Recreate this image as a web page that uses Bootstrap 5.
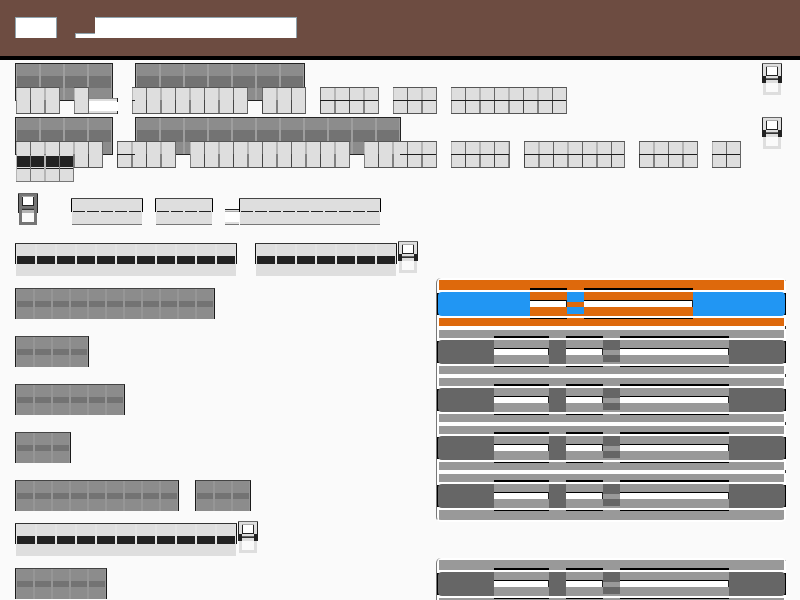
<!DOCTYPE html>
<html lang="en">
<head>
<meta charset="utf-8">
<meta name="viewport" content="width=device-width, initial-scale=1">
<title>Settings</title>
<link href="https://cdn.jsdelivr.net/npm/bootstrap@5.3.0/dist/css/bootstrap.min.css" rel="stylesheet">
<style>
body { background: #fafafa; font-family: Roboto, sans-serif; }
.appbar { background: #6d4c41; height: 60px; border-bottom: 4px solid #000; padding: 17px 15px 0; }
.brand-blk { height: 21px; background: #fff; border: 1px solid #90a4ae; border-bottom: 0; }
.brand-low { height: 5px; width: 20px; background: #fff; border: solid #90a4ae; border-width: 1px 0 0 1px; margin: 16px 0 0 18px; }
.brand-low + .brand-blk { border-left-color: #fff; }
.entry { padding: 3px 18px 0 15px; }
.glyph { display: block; width: 20px; height: 32px; flex: none; }

/* title words: 24px cells */
.title-line { height: 24px; gap: 22px; }
.tw { height: 38px; flex: none; width: calc(var(--n) * 24px + 2px); border: 1px solid #222;
  background:
    linear-gradient(90deg, #9e9e9e 1px, transparent 1px 23px, #9e9e9e 23px) 0 0 / 24px 100%,
    linear-gradient(#8c8c8c 0 12px, #737373 12px 24px, #8c8c8c 24px); }

/* paragraph words: two cells every 29px */
.para { gap: 14px; padding-left: 1px; position: relative; z-index: 1; }
.para.first-line { height: 14px; }
.pw { height: 27px; flex: none; --mx: 0; --mw: 0px;
  border: solid #555; border-width: 1px 0;
  background:
    linear-gradient(#1c1c1c, #1c1c1c) var(--mx) 12px / var(--mw) 1px no-repeat,
    linear-gradient(90deg, #b5b5b5 1px, transparent 1px 14px, #666 14px 15px, transparent 15px 28px, #b5b5b5 28px) 0 0 / 29px 12px repeat-x,
    linear-gradient(90deg, #808080 1px, transparent 1px 14px, #444 14px 15px, transparent 15px 28px, #808080 28px) 0 12px / 29px 13px repeat-x,
    #dedede;
  border-right: 1px solid #666; }
.pw.alt { background-position: var(--mx) 12px, -14px 0, -14px 12px, 0 0; }
.pw.mid { --mw: 100%; }
.pw.mid-start { --mw: 18px; }
.pw.mid-edge { --mw: 3px; }
.pw.mid-end { --mx: 100%; --mw: 36px; }
.n1 { width: 15px; } .n2 { width: 29px; } .n3 { width: 44px; } .n4 { width: 59px; } .n5 { width: 73px; }
.n6 { width: 87px; } .n7 { width: 101px; } .n8 { width: 116px; } .n11 { width: 160px; }
.low { width: 29px; height: 16px; margin: 11px 0 0 -14px;
  background:
    linear-gradient(#222 0 4px, transparent 4px 13px, #222 13px) 100% 0 / 1px 100% no-repeat,
    linear-gradient(#888 0 1px, #dedede 1px 3px, #fff 3px 13px, #dedede 13px 15px, #777 15px); }
.under-line { height: 27px; padding-left: 1px; position: relative; z-index: 2; }
.marked { height: 27px; flex: none; width: 58px; border-right: 1px solid #777; border-bottom: 1px solid #777;
  background:
    linear-gradient(90deg, #b5b5b5 1px, transparent 1px 14px, #777 14px 15px, transparent 15px 28px, #b5b5b5 28px) 0 0 / 29px 100%,
    linear-gradient(#dedede 0 1px, #222 1px 12px, #dedede 12px 13px, #222 13px 14px, #dedede 14px); }

/* pale row next to the grey glyph */
.status { padding: 11px 18px 0; height: 59px; }
.status-words { margin-left: 33px; padding-top: 5px; gap: 12px; }
.sw { height: 27px; flex: none; width: calc(var(--n) * 14px + 2px); border-top: 1px solid #444;
  background:
    linear-gradient(#000, #000) 0 0 / 1px 13px no-repeat,
    linear-gradient(#000, #000) 100% 0 / 1px 13px no-repeat,
    linear-gradient(90deg, #e6e6e6 1px, #222 1px 13px, #e6e6e6 13px) 1px 12px / 14px 1px repeat-x,
    linear-gradient(#dedede 0 25px, #777 25px) 1px 0 / calc(100% - 2px) 100% no-repeat; }
.sw-low { width: 14px; height: 16px; margin-top: 11px;
  background: linear-gradient(#222 0 1px, #dedede 1px 2px, #aaa 2px 3px, #fff 3px 13px, #dedede 13px 15px, #777 15px); }

/* section headings: 20px cells */
.sect { height: 37px; padding-left: 15px; }
.sect-words { gap: 18px; padding-top: 2px; margin-right: 1px; }
.hw { height: 33px; flex: none; width: calc(var(--n) * 20px + 2px); border-top: 1px solid #333;
  background:
    linear-gradient(#111, #111) 0 0 / 1px 20px no-repeat,
    linear-gradient(#111, #111) 100% 0 / 1px 20px no-repeat,
    linear-gradient(90deg, #e3e3e3 2px, #222 2px) 0 12px / 20px 8px repeat-x,
    linear-gradient(90deg, #e3e3e3 2px, transparent 2px) 0 0 / 20px 12px repeat-x,
    linear-gradient(#dedede, #dedede) 1px 0 / calc(100% - 2px) 100% no-repeat; }

/* option rows: 18px cells */
.opt { height: 48px; padding: 0 14px 0 15px; }
.opt-label { gap: 16px; padding-top: 10px; }
.ow { height: 31px; flex: none; width: calc(var(--n) * 18px + 2px); border: solid #1a1a1a; border-width: 1px 1px 0; border-top-color: #444;
  background:
    linear-gradient(90deg, #969696 1px, transparent 1px 17px, #969696 17px) 0 0 / 18px 100%,
    linear-gradient(#8c8c8c 0 12px, #737373 12px 18px, #8c8c8c 18px); }
.pick { --a: #999; --b: #666; --t: 4px; width: 350px; height: 48px; flex: none; border: 0; padding: 0 1px; position: relative;
  border-left: 1px solid #777;
  background:
    linear-gradient(#000, #000) 0 15px / 2px 22px no-repeat,
    linear-gradient(#000, #000) 100% 15px / 2px 22px no-repeat,
    linear-gradient(#333, #333) 100% 0 / 1px 3px no-repeat,
    linear-gradient(#fff 0 var(--t), var(--a) var(--t) 12px, #fff 12px 14px, transparent 14px 38px, #fff 38px 40px, var(--a) 40px) 2px 0 / calc(100% - 4px) 100% no-repeat,
    #fff; }
.pick::before { content: ""; position: absolute; left: 1px; right: 1px; top: 14px; height: 24px; border-radius: 4px; background: var(--b); }
.pick.top { --t: 2px; border-top-left-radius: 5px; border-top-right-radius: 5px; }
.pick.chosen { --a: #de690c; --b: #2196f3; }
.pick.bottom { height: 52px; border-bottom: 2px solid #fff; border-radius: 0 0 5px 5px; }
.lw { height: 48px; position: relative; flex: none;
  background:
    linear-gradient(#222, #222) 100% 22px / 1px 7px no-repeat,
    linear-gradient(transparent 10px, #000 10px 12px, #fff 12px 14px, var(--a) 14px 22px, #000 22px 23px, #fff 23px 29px, var(--a) 29px 38px, #fff 38px 40px, #000 40px 41px, transparent 41px); }
.lw.w2 { width: 37px; } .lw.w3 { width: 55px; } .lw.w6 { width: 109px; }
.ld { height: 48px; width: 17px; position: relative; flex: none;
  background: linear-gradient(transparent 14px, var(--b) 14px 24px, var(--a) 24px 29px, var(--b) 29px 36px, var(--a) 36px 38px, transparent 38px); }
.lsp { width: 17px; flex: none; }
.later { padding-top: 3px; }
</style>
<script src="https://cdn.jsdelivr.net/npm/bootstrap@5.3.0/dist/js/bootstrap.bundle.min.js"></script>
</head>
<body class="vh-100 overflow-hidden">
<svg class="d-none">
  <symbol id="box-glyph" viewBox="0 0 20 32">
    <path fill="currentColor" d="M1 18H19V32H1Z M0 0H20V20H0Z"/>
    <path fill="#222" d="M0 0H1V20H0Z M19 0H20V20H19Z M4 4H5V13H4Z M15 4H16V13H15Z M4 12H16V13H4Z"/>
    <path fill="#666" d="M0 0H20V1H0Z M4 15H16V16H4Z"/>
    <path fill="#aaa" d="M4 3H16V4H4Z"/>
    <path fill="#fff" d="M5 4H15V12H5Z"/>
    <path fill="#333" d="M4 16H16V17H4Z"/>
    <path fill="#fafafa" d="M4 20H16V29H4Z"/>
    <path fill="#dedede" d="M4 17H16V20H4Z" opacity=".6"/>
  </symbol>
  <symbol id="ends" viewBox="0 0 20 32">
    <use href="#box-glyph"/>
    <path fill="#222" d="M0 13H4V20H0Z M16 13H20V20H16Z"/>
  </symbol>
</svg>

<header class="appbar d-flex align-items-start">
  <span class="brand-blk" style="width:42px"></span>
  <span class="brand-low"></span>
  <span class="brand-blk" style="width:202px"></span>
</header>

<main>
  <section class="entry d-flex justify-content-between align-items-start">
    <div>
      <div class="title-line d-flex"><span class="tw" style="--n:4"></span><span class="tw" style="--n:7"></span></div>
      <div class="para d-flex">
        <span class="pw n3"></span><span class="pw n1"></span><span class="low"></span><span class="pw mid-edge n8"></span>
        <span class="pw alt n3"></span><span class="pw alt mid n4"></span><span class="pw mid n3"></span><span class="pw mid n8"></span>
      </div>
    </div>
    <svg class="glyph" style="color:#dedede"><use href="#ends"/></svg>
  </section>

  <section class="entry d-flex justify-content-between align-items-start">
    <div>
      <div class="title-line d-flex"><span class="tw" style="--n:4"></span><span class="tw" style="--n:11"></span></div>
      <div class="para first-line d-flex">
        <span class="pw n6"></span><span class="pw alt mid-start n4"></span><span class="pw n11"></span><span class="pw mid-end n5"></span>
        <span class="pw mid n4"></span><span class="pw alt mid n7"></span><span class="pw alt mid n4"></span><span class="pw mid n2"></span>
      </div>
      <div class="under-line d-flex"><span class="marked"></span></div>
    </div>
    <svg class="glyph" style="color:#dedede"><use href="#ends"/></svg>
  </section>

  <section class="status d-flex align-items-start">
    <svg class="glyph" style="color:#757575"><use href="#box-glyph"/></svg>
    <div class="status-words d-flex">
      <span class="sw" style="--n:5"></span><span class="sw" style="--n:4"></span>
      <span class="d-flex"><span class="sw-low"></span><span class="sw" style="--n:10"></span></span>
    </div>
  </section>

  <section>
    <div class="sect d-flex align-items-start">
      <div class="sect-words d-flex"><span class="hw" style="--n:11"></span><span class="hw" style="--n:7"></span></div>
      <svg class="glyph" style="color:#dedede"><use href="#ends"/></svg>
    </div>
    <div class="opt d-flex justify-content-between">
      <div class="opt-label d-flex"><span class="ow" style="--n:11"></span></div>
      <button type="button" class="pick top chosen d-flex justify-content-center"><span class="lw w2"></span><span class="ld"></span><span class="lw w6"></span></button>
    </div>
    <div class="opt d-flex justify-content-between">
      <div class="opt-label d-flex"><span class="ow" style="--n:4"></span></div>
      <button type="button" class="pick d-flex justify-content-center"><span class="lw w3"></span><span class="lsp"></span><span class="lw w2"></span><span class="ld"></span><span class="lw w6"></span></button>
    </div>
    <div class="opt d-flex justify-content-between">
      <div class="opt-label d-flex"><span class="ow" style="--n:6"></span></div>
      <button type="button" class="pick d-flex justify-content-center"><span class="lw w3"></span><span class="lsp"></span><span class="lw w2"></span><span class="ld"></span><span class="lw w6"></span></button>
    </div>
    <div class="opt d-flex justify-content-between">
      <div class="opt-label d-flex"><span class="ow" style="--n:3"></span></div>
      <button type="button" class="pick d-flex justify-content-center"><span class="lw w3"></span><span class="lsp"></span><span class="lw w2"></span><span class="ld"></span><span class="lw w6"></span></button>
    </div>
    <div class="opt d-flex justify-content-between">
      <div class="opt-label d-flex"><span class="ow" style="--n:9"></span><span class="ow" style="--n:3"></span></div>
      <button type="button" class="pick bottom d-flex justify-content-center"><span class="lw w3"></span><span class="lsp"></span><span class="lw w2"></span><span class="ld"></span><span class="lw w6"></span></button>
    </div>
  </section>

  <section class="later">
    <div class="sect d-flex align-items-start">
      <div class="sect-words d-flex"><span class="hw" style="--n:11"></span></div>
      <svg class="glyph" style="color:#dedede"><use href="#ends"/></svg>
    </div>
    <div class="opt d-flex justify-content-between">
      <div class="opt-label d-flex"><span class="ow" style="--n:5"></span></div>
      <button type="button" class="pick top d-flex justify-content-center"><span class="lw w3"></span><span class="lsp"></span><span class="lw w2"></span><span class="ld"></span><span class="lw w6"></span></button>
    </div>
  </section>
</main>
</body>
</html>
